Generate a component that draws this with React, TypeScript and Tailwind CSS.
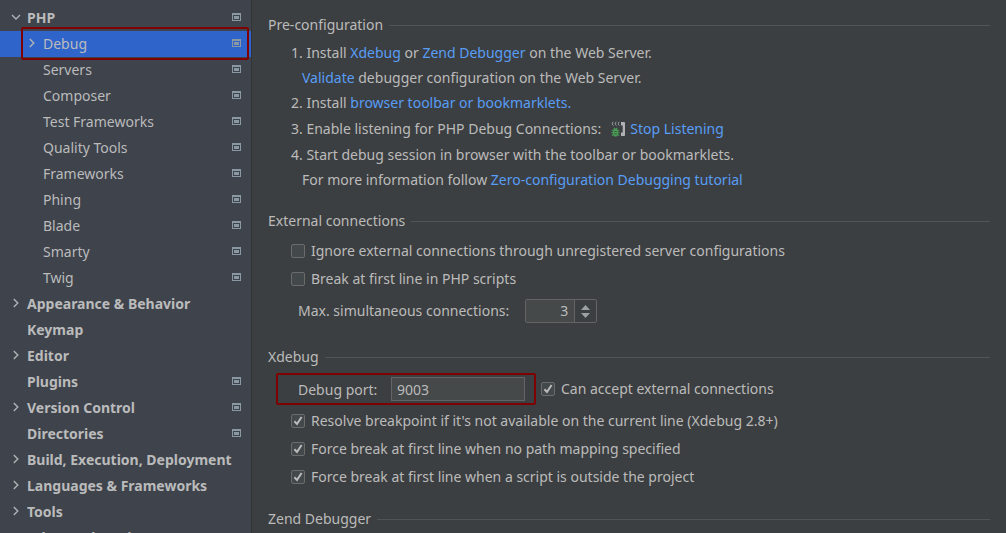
import { useState } from "react";
import type { ReactNode } from "react";

type TreeItem = {
  label: string;
  level: 0 | 1;
  state?: "open" | "closed";
  project?: boolean;
  selected?: boolean;
};

const items: TreeItem[] = [
  { label: "PHP", level: 0, state: "open", project: true },
  { label: "Debug", level: 1, state: "closed", project: true, selected: true },
  { label: "Servers", level: 1, project: true },
  { label: "Composer", level: 1, project: true },
  { label: "Test Frameworks", level: 1, project: true },
  { label: "Quality Tools", level: 1, project: true },
  { label: "Frameworks", level: 1, project: true },
  { label: "Phing", level: 1, project: true },
  { label: "Blade", level: 1, project: true },
  { label: "Smarty", level: 1, project: true },
  { label: "Twig", level: 1, project: true },
  { label: "Appearance & Behavior", level: 0, state: "closed" },
  { label: "Keymap", level: 0 },
  { label: "Editor", level: 0, state: "closed" },
  { label: "Plugins", level: 0, project: true },
  { label: "Version Control", level: 0, state: "closed", project: true },
  { label: "Directories", level: 0, project: true },
  { label: "Build, Execution, Deployment", level: 0, state: "closed" },
  { label: "Languages & Frameworks", level: 0, state: "closed" },
  { label: "Tools", level: 0, state: "closed" },
  { label: "Advanced Settings", level: 0 },
];

function Chevron({ state }: { state?: "open" | "closed" }) {
  return (
    <svg width="10" height="10" viewBox="0 0 10 10" fill="none" stroke="#b0b3b5" strokeWidth="1.4" className="shrink-0" aria-hidden="true">
      {state === "open" && <path d="M1 3l4 4 4-4" />}
      {state === "closed" && <path d="M2.8 1l4 4-4 4" />}
    </svg>
  );
}

function ProjectIcon() {
  return (
    <svg width="9" height="8" viewBox="0 0 9 8" className="shrink-0" aria-hidden="true">
      <path fillRule="evenodd" fill="#8a98a3" d="M0 0h9v8H0zM1 2v5h7V2z" />
      <rect x="2" y="3" width="5" height="3" fill="#8a98a3" />
    </svg>
  );
}

function ListeningIcon() {
  return (
    <svg width="15" height="16" viewBox="0 0 15 16" fill="none" className="shrink-0" aria-hidden="true">
      <path stroke="#afb1b3" strokeWidth="0.9" d="M2.4.8C.9 2 .9 3.4 2.4 4.6M5.4.8C3.9 2 3.9 3.4 5.4 4.6M8.4.8C6.9 2 6.9 3.4 8.4 4.6" />
      <path fill="#afb1b3" d="M10 1h3.2q.8 0 .8.8v12.4q0 .8-.8.8H10v-3.5h1.7v-7H10z" />
      <path fill="#499c54" d="M4.5 7.6c1.7 0 2.5 1.2 2.5 3.2v1.6c0 2-.9 3.2-2.5 3.2S2 14.400 2 12.400v-1.600c0-2 .8-3.200 2.500-3.200z" />
      <path stroke="#499c54" strokeWidth="1.1" d="M2.800 6.800l1 1.500M6.200 6.800l-1 1.500M.8 9.200l1.800.8M8.200 9.200l-1.800.8M.3 11.700h8.400M.8 14.500l1.800-1M8.200 14.500l-1.800-1" />
      <path stroke="#3c3f41" strokeWidth="0.7" d="M3.300 10.500h2.400M3.300 12.800h2.400" />
    </svg>
  );
}

function Tree() {
  return (
    <nav aria-label="Settings" className="w-[252px] shrink-0 overflow-hidden border-r border-[#323435] bg-[#3e434c] pt-[5px]">
      <ul>
        {items.map((item) => (
          <li key={item.label} className="relative">
            <button
              type="button"
              className={`flex h-[26px] w-full items-center gap-[6px] pr-[10px] pb-[2px] text-left whitespace-nowrap ${
                item.selected ? "bg-[#2f65ca]" : ""
              } ${item.level === 0 ? "pl-[11px] font-bold" : "pl-[27px]"}`}
            >
              <Chevron state={item.state} />
              <span className="flex-1">{item.label}</span>
              {item.project && <ProjectIcon />}
            </button>
            {item.selected && (
              <span className="pointer-events-none absolute -top-1 right-[2px] -bottom-[3px] left-[21px] z-10 rounded-xs border-2 border-[#7f0000]" />
            )}
          </li>
        ))}
      </ul>
    </nav>
  );
}

function Heading({ children }: { children: ReactNode }) {
  return (
    <h2 className="flex h-6 items-center gap-[6px]">
      <span className="pb-[2px]">{children}</span>
      <span className="h-px flex-1 bg-[#515456]" />
    </h2>
  );
}

function Link({ children }: { children: ReactNode }) {
  return (
    <a href="#" className="text-[#589df6]">
      {children}
    </a>
  );
}

function Check({ label, initial = false }: { label: string; initial?: boolean }) {
  const [checked, setChecked] = useState(initial);
  return (
    <label className="flex h-7 items-center gap-[6px]">
      <span className="grid size-[14px] shrink-0">
        <input
          type="checkbox"
          checked={checked}
          onChange={(e) => setChecked(e.target.checked)}
          className="col-start-1 row-start-1 size-[14px] appearance-none rounded-xs border border-[#6b6b6b] bg-[#43494a]"
        />
        {checked && (
          <svg viewBox="0 0 14 14" fill="none" stroke="#bbbbbb" strokeWidth="2" className="pointer-events-none col-start-1 row-start-1 size-[14px]" aria-hidden="true">
            <path d="M3.4 7.2L6 10l4.6-7" />
          </svg>
        )}
      </span>
      <span className="pb-[2px]">{label}</span>
    </label>
  );
}

function Spinner() {
  const [value, setValue] = useState(3);
  return (
    <div className="flex h-6 w-[72px] rounded-xs border border-[#646464]">
      <input
        id="max-connections"
        type="text"
        inputMode="numeric"
        value={value}
        onChange={(e) => setValue(Number(e.target.value) || 0)}
        className="w-12 bg-[#45494a] pr-[6px] pb-[2px] text-right outline-none"
      />
      <div className="flex flex-1 flex-col items-center justify-center gap-[3px] border-l border-[#646464]">
        <button type="button" aria-label="Increase" onClick={() => setValue(value + 1)}>
          <svg width="9" height="5" viewBox="0 0 9 5" className="block" aria-hidden="true">
            <path d="M4.5 0L9 5H0z" fill="#9da0a2" />
          </svg>
        </button>
        <button type="button" aria-label="Decrease" onClick={() => setValue(Math.max(0, value - 1))}>
          <svg width="9" height="5" viewBox="0 0 9 5" className="block" aria-hidden="true">
            <path d="M4.5 5L9 0H0z" fill="#9da0a2" />
          </svg>
        </button>
      </div>
    </div>
  );
}

export default function App() {
  const [port, setPort] = useState("9003");
  return (
    <div className="flex h-screen overflow-hidden bg-[#3c3f41] font-['Noto_Sans',sans-serif] text-[14px] leading-[25px] text-[#bbbbbb]">
      <Tree />
      <main className="min-w-0 flex-1 overflow-hidden pt-[13px] pr-4 pl-4 whitespace-nowrap">
        <section>
          <Heading>Pre-configuration</Heading>
          <ol className="pt-[3px] pb-px pl-[23px]">
            <li>
              <p>
                1. Install <Link>Xdebug</Link> or <Link>Zend Debugger</Link> on the Web Server.
              </p>
              <p className="pl-[11px]">
                <Link>Validate</Link> debugger configuration on the Web Server.
              </p>
            </li>
            <li>
              2. Install <Link>browser toolbar or bookmarklets.</Link>
            </li>
            <li className="flex h-[27px] items-center">
              <span className="pr-[10px]">3. Enable listening for PHP Debug Connections:</span>
              <ListeningIcon />
              <span className="pl-1">
                <Link>Stop Listening</Link>
              </span>
            </li>
            <li>
              <p>4. Start debug session in browser with the toolbar or bookmarklets.</p>
              <p className="pl-[11px]">
                For more information follow <Link>Zero-configuration Debugging tutorial</Link>
              </p>
            </li>
          </ol>
        </section>

        <section className="pt-4">
          <Heading>External connections</Heading>
          <div className="pt-1 pl-[23px]">
            <Check label="Ignore external connections through unregistered server configurations" />
            <Check label="Break at first line in PHP scripts" />
            <div className="flex h-9 items-center gap-4 pl-[7px]">
              <label htmlFor="max-connections" className="pb-[2px]">
                Max. simultaneous connections:
              </label>
              <Spinner />
            </div>
          </div>
        </section>

        <section className="pt-4">
          <Heading>Xdebug</Heading>
          <div className="flex items-center gap-[5px] pt-1 pl-2">
            <div className="flex h-8 w-[260px] items-center justify-between rounded-xs border-2 border-[#7f0000] pr-[9px] pl-5">
              <label htmlFor="debug-port">Debug port:</label>
              <input
                id="debug-port"
                type="text"
                value={port}
                onChange={(e) => setPort(e.target.value)}
                className="h-6 w-[134px] border border-[#646464] bg-[#45494a] px-[5px] outline-none"
              />
            </div>
            <Check label="Can accept external connections" initial />
          </div>
          <div className="pt-[2px] pl-[23px]">
            <Check label="Resolve breakpoint if it's not available on the current line (Xdebug 2.8+)" initial />
            <Check label="Force break at first line when no path mapping specified" initial />
            <Check label="Force break at first line when a script is outside the project" initial />
          </div>
        </section>

        <section className="pt-4">
          <Heading>Zend Debugger</Heading>
        </section>
      </main>
    </div>
  );
}
